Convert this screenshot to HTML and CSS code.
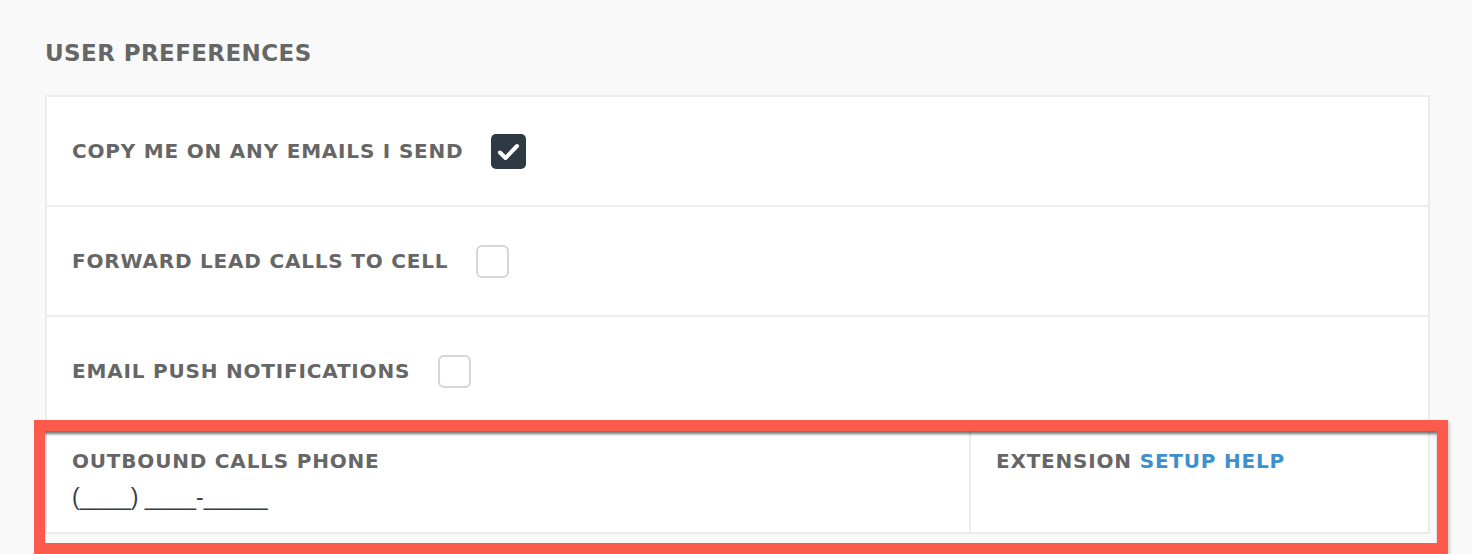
FILE: index.html
```html
<!DOCTYPE html>
<html lang="en">
<head>
  <meta charset="UTF-8" />
  <title>User Preferences</title>
  <link rel="stylesheet" href="styles.css">
</head>
<body>

  <h2 class="section-title">User Preferences</h2>

  <div class="pref-card">
    <div class="pref-row">
      <label class="pref-label" for="copy-me">Copy me on any emails I send</label>
      <input type="checkbox" id="copy-me" class="pref-check" checked />
    </div>
    <div class="pref-row">
      <label class="pref-label" for="forward-calls">Forward lead calls to cell</label>
      <input type="checkbox" id="forward-calls" class="pref-check" />
    </div>
    <div class="pref-row">
      <label class="pref-label" for="push-notes">Email push notifications</label>
      <input type="checkbox" id="push-notes" class="pref-check" />
    </div>
    <div class="pref-split">
      <div class="split-col split-left">
        <div class="pref-label">Outbound calls phone</div>
        <div class="phone-mask">(____) ____-_____</div>
      </div>
      <div class="split-col split-right">
        <div class="pref-label">Extension <a href="#" class="help-link">Setup help</a></div>
      </div>
      <div class="highlight-box"></div>
    </div>
  </div>

</body>
</html>
```

FILE: styles.css
```css
body {
  margin: 0;
  padding: 40px 42px 20px 45px;
  background-color: #f9f9f9;
  font-family: "DejaVu Sans", Verdana, sans-serif;
}

.section-title {
  margin: 0;
  font-size: 23px;
  line-height: 26px;
  font-weight: bold;
  letter-spacing: 0.4px;
  text-transform: uppercase;
  color: #666;
}

.pref-card {
  margin-top: 29px;
  background-color: #fff;
  border: 2px solid #ececec;
}

.pref-row {
  display: flex;
  align-items: center;
  height: 108px;
  padding: 0 25px;
  border-bottom: 2px solid #ececec;
}

.pref-label {
  font-size: 20px;
  line-height: 24px;
  font-weight: bold;
  letter-spacing: 0.8px;
  text-transform: uppercase;
  color: #666;
}

.pref-check {
  appearance: none;
  -webkit-appearance: none;
  margin: 0 0 0 28px;
  width: 33px;
  height: 33px;
  border: 2px solid #d6d6d6;
  border-radius: 6px;
  background-color: #fff;
}

.pref-check:checked {
  width: 35px;
  height: 35px;
  border: none;
  border-radius: 5px;
  background-color: #2f3944;
  background-image: url("data:image/svg+xml;utf8,<svg xmlns='http://www.w3.org/2000/svg' viewBox='0 0 35 35'><path d='M9 18.5l5.5 5.5L26 12' fill='none' stroke='white' stroke-width='4' stroke-linecap='round' stroke-linejoin='round'/></svg>");
}

.pref-split {
  position: relative;
  display: flex;
}

.split-col {
  box-sizing: border-box;
  padding: 22px 25px 21px;
}

.split-left {
  flex: 1;
  border-right: 2px solid #ececec;
}

.split-right {
  flex: 0 0 457px;
}

.phone-mask {
  margin-top: 10px;
  font-family: "Liberation Sans", Arial, sans-serif;
  font-size: 23px;
  line-height: 28px;
  color: #343e48;
}

.help-link {
  color: #408fcd;
  text-decoration: none;
}

.highlight-box {
  position: absolute;
  left: -13px;
  top: -7px;
  right: -20px;
  bottom: -22px;
  border: 11px solid #fb5a4d;
  box-shadow: inset 0 4px 3px -1px rgba(0, 0, 0, 0.55), 2px 2px 3px rgba(0, 0, 0, 0.18);
  pointer-events: none;
}
```
